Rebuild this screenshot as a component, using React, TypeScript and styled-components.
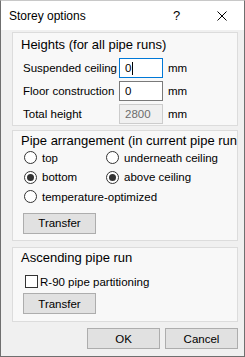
import React from 'react';
import styled, { createGlobalStyle } from 'styled-components';

const GlobalStyle = createGlobalStyle`
  html, body {
    margin: 0;
    padding: 0;
    background: #ffffff;
  }
  body {
    font-family: "Liberation Sans", Arial, sans-serif;
    color: #000000;
  }
`;

const Window = styled.div`
  box-sizing: border-box;
  width: 245px;
  height: 357px;
  border: 1px solid #6f6f6f;
  border-top-color: #c8c8c8;
  display: flex;
  flex-direction: column;
  background: #f0f0f0;
`;

const TitleBar = styled.div`
  height: 29px;
  background: #ffffff;
  display: flex;
  align-items: center;
  padding-left: 8px;
  font-size: 12px;
`;

const Title = styled.span`
  flex: 1;
`;

const TitleButton = styled.span`
  width: 45px;
  display: flex;
  justify-content: center;
  align-items: center;
  font-size: 13px;
`;

const Body = styled.div`
  flex: 1;
  display: flex;
  flex-direction: column;
  padding: 2px 6px 0 11px;
`;

const Panel = styled.div<{ $h: number; $mt: number }>`
  box-sizing: border-box;
  height: ${p => p.$h}px;
  margin-top: ${p => p.$mt}px;
  background: #f8f8f8;
  border: 1px solid #dcdcdc;
  padding-left: 8px;
  overflow: hidden;
`;

const Heading = styled.div<{ $top: number }>`
  font-size: 13px;
  line-height: 16px;
  margin-top: ${p => p.$top}px;
  white-space: nowrap;
`;

const FormGrid = styled.div`
  display: grid;
  grid-template-columns: 92px 44px auto;
  grid-auto-rows: 20px;
  column-gap: 4px;
  row-gap: 3px;
  margin-top: 5px;
  padding-left: 2px;
  font-size: 11.5px;
  align-items: center;
  white-space: nowrap;
`;

const Field = styled.div<{ $focus?: boolean; $disabled?: boolean }>`
  box-sizing: border-box;
  height: 20px;
  border: 1px solid ${p => (p.$focus ? '#0078d7' : p.$disabled ? '#cccccc' : '#7a7a7a')};
  background: ${p => (p.$disabled ? '#f0f0f0' : '#ffffff')};
  color: ${p => (p.$disabled ? '#6d6d6d' : '#000000')};
  padding-left: 5px;
  display: flex;
  align-items: center;
  font-size: 11.5px;
`;

const Caret = styled.span`
  width: 1px;
  height: 13px;
  background: #000000;
  margin-left: 1px;
`;

const Unit = styled.span`
  padding-left: 1px;
`;

const RadioGrid = styled.div`
  display: grid;
  grid-template-columns: 82px auto;
  grid-auto-rows: 19.5px;
  margin-top: -1px;
  padding-left: 3px;
  font-size: 11.5px;
  align-items: center;
`;

const Choice = styled.label<{ $span?: boolean }>`
  display: flex;
  align-items: center;
  gap: 5px;
  white-space: nowrap;
  grid-column: ${p => (p.$span ? '1 / 3' : 'auto')};
`;

const RadioDot = styled.span<{ $on?: boolean }>`
  box-sizing: border-box;
  width: 13px;
  height: 13px;
  border: 1px solid #333333;
  border-radius: 50%;
  background: #ffffff;
  display: flex;
  align-items: center;
  justify-content: center;

  &::after {
    content: '';
    width: 7px;
    height: 7px;
    border-radius: 50%;
    background: ${p => (p.$on ? '#333333' : 'transparent')};
  }
`;

const CheckBox = styled.span`
  box-sizing: border-box;
  width: 13px;
  height: 13px;
  border: 1px solid #333333;
  background: #ffffff;
`;

const CheckRow = styled.label`
  display: flex;
  align-items: center;
  gap: 2px;
  margin-top: 9px;
  padding-left: 4px;
  font-size: 11.5px;
  height: 13px;
  white-space: nowrap;
`;

const Button = styled.button<{ $mt?: number }>`
  box-sizing: border-box;
  width: 73px;
  height: 21px;
  margin-top: ${p => p.$mt ?? 0}px;
  border: 1px solid #adadad;
  background: #e1e1e1;
  font-family: "Liberation Sans", Arial, sans-serif;
  font-size: 11.5px;
  color: #000000;
  padding: 0;
  display: flex;
  align-items: center;
  justify-content: center;
`;

const ButtonWrap = styled.div`
  padding-left: 2px;
`;

const Footer = styled.div`
  display: flex;
  justify-content: flex-end;
  gap: 5px;
  margin-top: 6px;
`;

export default function App() {
  return (
    <>
      <GlobalStyle />
      <Window>
        <TitleBar>
          <Title>Storey options</Title>
          <TitleButton>?</TitleButton>
          <TitleButton>
            <svg width="10" height="10" viewBox="0 0 10 10">
              <path d="M0.5 0.5 L9.5 9.5 M9.5 0.5 L0.5 9.5" stroke="#000" strokeWidth="1" />
            </svg>
          </TitleButton>
        </TitleBar>
        <Body>
          <Panel $h={94} $mt={0}>
            <Heading $top={4}>Heights (for all pipe runs)</Heading>
            <FormGrid>
              <span>Suspended ceiling</span>
              <Field $focus>
                0<Caret />
              </Field>
              <Unit>mm</Unit>
              <span>Floor construction</span>
              <Field>0</Field>
              <Unit>mm</Unit>
              <span>Total height</span>
              <Field $disabled>2800</Field>
              <Unit>mm</Unit>
            </FormGrid>
          </Panel>
          <Panel $h={111} $mt={4}>
            <Heading $top={2}>Pipe arrangement (in current pipe run)</Heading>
            <RadioGrid>
              <Choice>
                <RadioDot />
                top
              </Choice>
              <Choice>
                <RadioDot />
                underneath ceiling
              </Choice>
              <Choice>
                <RadioDot $on />
                bottom
              </Choice>
              <Choice>
                <RadioDot $on />
                above ceiling
              </Choice>
              <Choice $span>
                <RadioDot />
                temperature-optimized
              </Choice>
            </RadioGrid>
            <ButtonWrap>
              <Button $mt={6}>Transfer</Button>
            </ButtonWrap>
          </Panel>
          <Panel $h={75} $mt={6}>
            <Heading $top={2}>Ascending pipe run</Heading>
            <CheckRow>
              <CheckBox />
              R-90 pipe partitioning
            </CheckRow>
            <ButtonWrap>
              <Button $mt={5}>Transfer</Button>
            </ButtonWrap>
          </Panel>
          <Footer>
            <Button>OK</Button>
            <Button>Cancel</Button>
          </Footer>
        </Body>
      </Window>
    </>
  );
}
